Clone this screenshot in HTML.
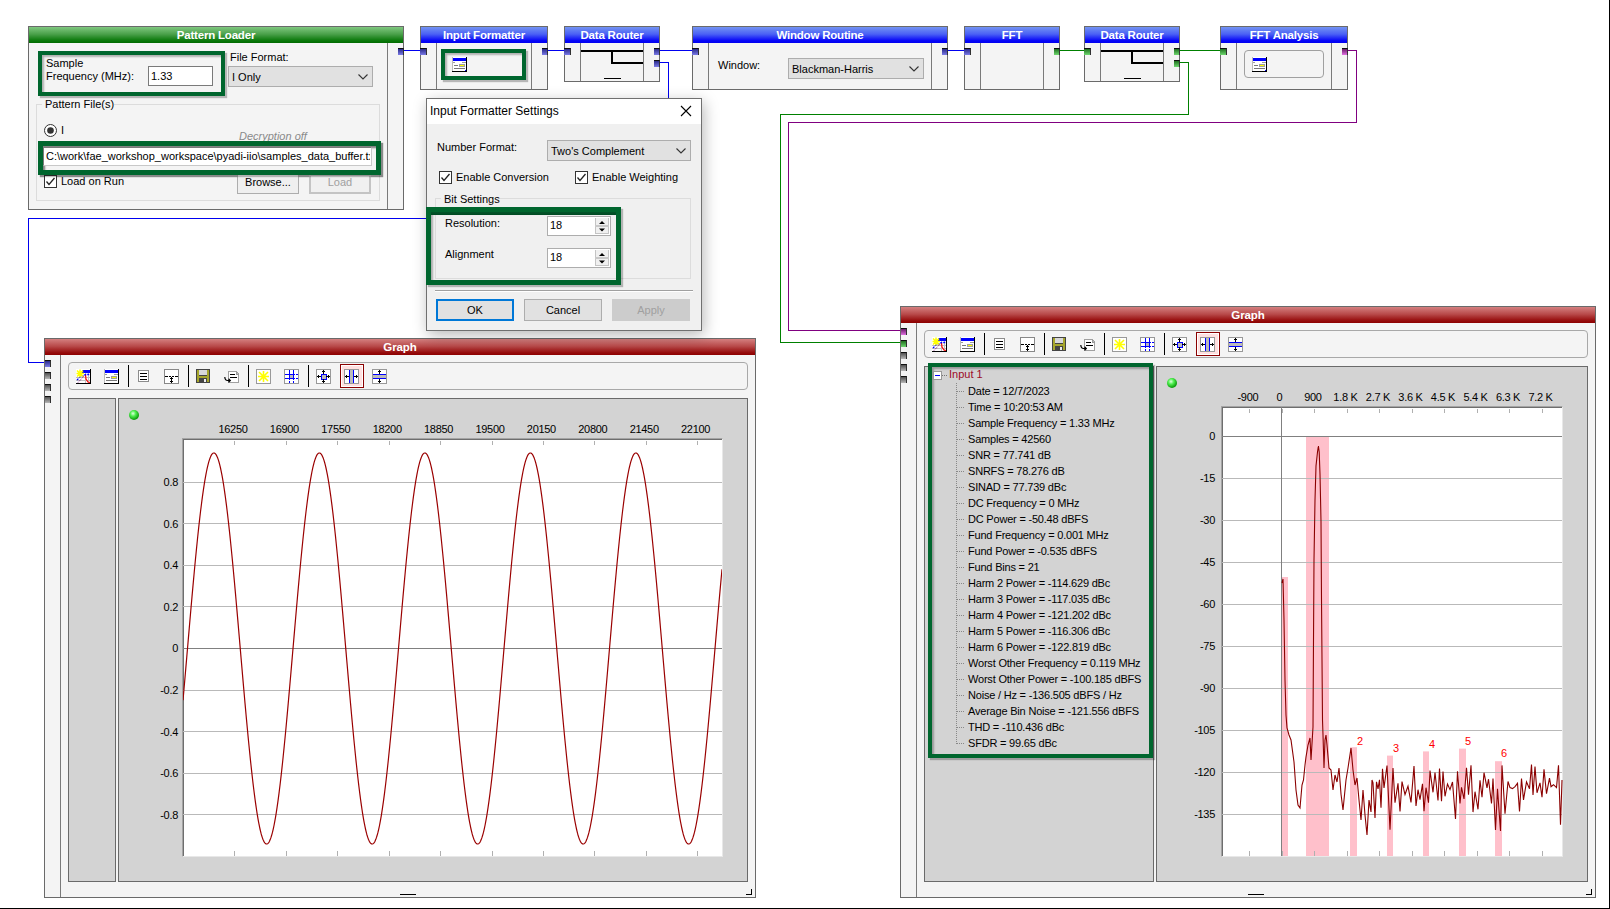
<!DOCTYPE html><html><head><meta charset="utf-8"><style>
html,body{margin:0;padding:0;} body{width:1610px;height:909px;position:relative;overflow:hidden;background:#fff;font-family:"Liberation Sans", sans-serif;}
body>div,body>svg{position:absolute;} .t{white-space:pre;color:#000;}
</style></head><body>
<div style="left:403px;top:50px;width:18px;height:1px;background:#0000f0"></div>
<div style="left:547px;top:50px;width:18px;height:1px;background:#0000f0"></div>
<div style="left:659px;top:50px;width:34px;height:1px;background:#0000f0"></div>
<div style="left:659px;top:62px;width:10px;height:1px;background:#0000f0"></div>
<div style="left:668px;top:62px;width:1px;height:157px;background:#0000f0"></div>
<div style="left:28px;top:218px;width:641px;height:1px;background:#0000f0"></div>
<div style="left:28px;top:218px;width:1px;height:145px;background:#0000f0"></div>
<div style="left:28px;top:362px;width:17px;height:1px;background:#0000f0"></div>
<div style="left:947px;top:50px;width:18px;height:1px;background:#0000f0"></div>
<div style="left:1059px;top:50px;width:26px;height:1px;background:#008000"></div>
<div style="left:1179px;top:50px;width:42px;height:1px;background:#008000"></div>
<div style="left:1179px;top:62px;width:10px;height:1px;background:#008000"></div>
<div style="left:1188px;top:62px;width:1px;height:53px;background:#008000"></div>
<div style="left:780px;top:114px;width:409px;height:1px;background:#008000"></div>
<div style="left:780px;top:114px;width:1px;height:229px;background:#008000"></div>
<div style="left:780px;top:342px;width:121px;height:1px;background:#008000"></div>
<div style="left:1347px;top:50px;width:10px;height:1px;background:#800080"></div>
<div style="left:1356px;top:50px;width:1px;height:73px;background:#800080"></div>
<div style="left:788px;top:122px;width:569px;height:1px;background:#800080"></div>
<div style="left:788px;top:122px;width:1px;height:209px;background:#800080"></div>
<div style="left:788px;top:330px;width:113px;height:1px;background:#800080"></div>
<div style="left:28px;top:26px;width:376px;height:184px;background:#f4f4f4;border:1px solid #6a6a6a;box-sizing:border-box"></div>
<div style="left:29px;top:27px;width:374px;height:16px;background:linear-gradient(#80c880,#4aa04a 45%,#0a780a 85%,#006a00)"></div>
<div style="left:387px;top:43px;width:1px;height:166px;background:#7a7a7a"></div>
<div class="t" style="left:28.0px;top:29.6px;width:376px;text-align:center;font-size:11.5px;line-height:11.5px;font-weight:bold;color:#fff;letter-spacing:-0.2px">Pattern Loader</div>
<div style="left:398px;top:48px;width:6px;height:7px;background:linear-gradient(#2a2a8a,#7a7ae6);border-top:1px solid #101010;border-right:1px solid #303030;box-sizing:border-box"></div>
<div style="left:38px;top:51px;width:187px;height:45px;border:4px solid #00662e;box-sizing:border-box;box-shadow:2px 2px 1px rgba(0,0,0,.25), inset 2px 2px 2px rgba(0,0,0,.28)"></div>
<div class="t" style="left:46px;top:58px;font-size:11px;line-height:11px;">Sample</div>
<div class="t" style="left:46px;top:71px;font-size:11px;line-height:11px;">Frequency (MHz):</div>
<div style="left:148px;top:66px;width:65px;height:20px;background:#fff;border:1px solid #7a7a7a;box-sizing:border-box"></div>
<div class="t" style="left:151px;top:71px;font-size:11px;line-height:11px;">1.33</div>
<div class="t" style="left:230px;top:52px;font-size:11px;line-height:11px;">File Format:</div>
<div style="left:228px;top:66px;width:145px;height:21px;background:#e1e1e1;border:1px solid #adadad;box-sizing:border-box"></div>
<div class="t" style="left:232px;top:72px;font-size:11px;line-height:11px;color:#000">I Only</div>
<svg style="left:358px;top:74px" width="10" height="6"><polyline points="0.5,0.5 5,5 9.5,0.5" fill="none" stroke="#333" stroke-width="1.1"/></svg>
<div style="left:36px;top:104px;width:344px;height:97px;border:1px solid #dcdcdc;box-sizing:border-box"></div>
<div style="left:42px;top:100px;width:72px;height:10px;background:#f4f4f4"></div>
<div class="t" style="left:45px;top:99px;font-size:11px;line-height:11px;">Pattern File(s)</div>
<svg style="left:43px;top:123px" width="15" height="15"><circle cx="7.5" cy="7.5" r="6" fill="#fff" stroke="#333" stroke-width="1"/><circle cx="7.5" cy="7.5" r="3.3" fill="#333"/></svg>
<div class="t" style="left:61px;top:125px;font-size:11px;line-height:11px;">I</div>
<div class="t" style="left:239px;top:131px;font-size:11px;line-height:11px;font-style:italic;color:#8a8a8a">Decryption off</div>
<div style="left:38px;top:141px;width:343px;height:34px;border:5px solid #00662e;box-sizing:border-box;box-shadow:2px 2px 1px rgba(0,0,0,.25), inset 2px 2px 2px rgba(0,0,0,.28)"></div>
<div style="left:43px;top:147px;width:329px;height:19px;background:#fff;border:1px solid #7a7a7a;border-right-color:#c8c8c8;border-bottom-color:#c8c8c8;box-sizing:border-box"></div>
<div class="t" style="left:46px;top:151px;width:324px;overflow:hidden;font-size:11px;line-height:11px;letter-spacing:0px">C:\work\fae_workshop_workspace\pyadi-iio\samples_data_buffer.txt</div>
<div style="left:44px;top:175px;width:13px;height:13px;background:#fff;border:1px solid #333;box-sizing:border-box"></div>
<svg style="left:44px;top:175px" width="13" height="13"><polyline points="2.5,6.5 5,9.5 10.5,3" fill="none" stroke="#222" stroke-width="1.3"/></svg>
<div class="t" style="left:61px;top:176px;font-size:11px;line-height:11px;">Load on Run</div>
<div style="left:237px;top:174px;width:62px;height:20px;background:#e1e1e1;border:1px solid #adadad;box-sizing:border-box;background:#efefef"></div>
<div class="t" style="left:237.5px;top:177px;width:61px;text-align:center;font-size:11px;line-height:11px;color:#000">Browse...</div>
<div style="left:309px;top:174px;width:62px;height:20px;background:#e1e1e1;border:1px solid #adadad;box-sizing:border-box;background:#f0f0f0;border:2px solid #c4c4c4"></div>
<div class="t" style="left:309.5px;top:177px;width:61px;text-align:center;font-size:11px;line-height:11px;color:#a0a0a0">Load</div>
<div style="left:38px;top:141px;width:343px;height:34px;border:5px solid #00662e;box-sizing:border-box;box-shadow:2px 2px 1px rgba(0,0,0,.25), inset 2px 2px 2px rgba(0,0,0,.28)"></div>
<div style="left:43px;top:147px;width:329px;height:19px;background:#fff;border:1px solid #7a7a7a;border-right-color:#c8c8c8;border-bottom-color:#c8c8c8;box-sizing:border-box"></div>
<div class="t" style="left:46px;top:151px;width:324px;overflow:hidden;font-size:11px;line-height:11px;letter-spacing:0px">C:\work\fae_workshop_workspace\pyadi-iio\samples_data_buffer.txt</div>
<div style="left:420px;top:26px;width:128px;height:64px;background:#f4f4f4;border:1px solid #6a6a6a;box-sizing:border-box"></div>
<div style="left:421px;top:27px;width:126px;height:16px;background:linear-gradient(#7393f2,#4a60f5 45%,#0606f8 85%,#0000f0)"></div>
<div style="left:436px;top:43px;width:1px;height:46px;background:#7a7a7a"></div>
<div style="left:531px;top:43px;width:1px;height:46px;background:#7a7a7a"></div>
<div class="t" style="left:420.0px;top:29.6px;width:128px;text-align:center;font-size:11.5px;line-height:11.5px;font-weight:bold;color:#fff;letter-spacing:-0.2px">Input Formatter</div>
<div style="left:420px;top:48px;width:7px;height:7px;background:linear-gradient(#2a2a8a,#7a7ae6);border-top:1px solid #101010;border-right:1px solid #303030;box-sizing:border-box"></div>
<div style="left:542px;top:48px;width:6px;height:7px;background:linear-gradient(#2a2a8a,#7a7ae6);border-top:1px solid #101010;border-right:1px solid #303030;box-sizing:border-box"></div>
<div style="left:441px;top:49px;width:85px;height:31px;border:4px solid #00662e;box-sizing:border-box;box-shadow:2px 2px 1px rgba(0,0,0,.25), inset 2px 2px 2px rgba(0,0,0,.28)"></div>
<svg style="left:452px;top:57px" width="15" height="15" shape-rendering="crispEdges">
<rect x="0" y="0" width="15" height="15" fill="#fff"/>
<rect x="0" y="1" width="14" height="3" fill="#0000ff"/>
<rect x="1" y="5" width="2" height="1" fill="#999"/><rect x="10" y="5" width="4" height="1" fill="#999"/>
<rect x="2" y="8" width="4" height="1" fill="#777"/><rect x="7" y="7" width="6" height="3" fill="#a0a0a0"/><rect x="8" y="8" width="4" height="1" fill="#ffff00"/>
<rect x="2" y="11" width="11" height="1" fill="#777"/>
<rect x="0" y="0" width="1" height="14" fill="#bbb"/>
<rect x="14" y="0" width="1" height="15" fill="#000"/><rect x="0" y="14" width="15" height="1" fill="#000"/>
<rect x="13" y="13" width="1" height="1" fill="#00f"/>
</svg>
<div style="left:564px;top:26px;width:96px;height:56px;background:#f4f4f4;border:1px solid #6a6a6a;box-sizing:border-box"></div>
<div style="left:565px;top:27px;width:94px;height:16px;background:linear-gradient(#7393f2,#4a60f5 45%,#0606f8 85%,#0000f0)"></div>
<div style="left:580px;top:43px;width:1px;height:38px;background:#7a7a7a"></div>
<div style="left:643px;top:43px;width:1px;height:38px;background:#7a7a7a"></div>
<div class="t" style="left:564.0px;top:29.6px;width:96px;text-align:center;font-size:11.5px;line-height:11.5px;font-weight:bold;color:#fff;letter-spacing:-0.2px">Data Router</div>
<div style="left:581px;top:50px;width:62px;height:2px;background:#000"></div>
<div style="left:611px;top:50px;width:2px;height:14px;background:#000"></div>
<div style="left:611px;top:62px;width:32px;height:2px;background:#000"></div>
<div style="left:604px;top:78px;width:17px;height:1px;background:#000"></div>
<div style="left:564px;top:48px;width:7px;height:7px;background:linear-gradient(#2a2a8a,#7a7ae6);border-top:1px solid #101010;border-right:1px solid #303030;box-sizing:border-box"></div>
<div style="left:654px;top:48px;width:6px;height:7px;background:linear-gradient(#2a2a8a,#7a7ae6);border-top:1px solid #101010;border-right:1px solid #303030;box-sizing:border-box"></div>
<div style="left:654px;top:60px;width:6px;height:7px;background:linear-gradient(#2a2a8a,#7a7ae6);border-top:1px solid #101010;border-right:1px solid #303030;box-sizing:border-box"></div>
<div style="left:692px;top:26px;width:256px;height:64px;background:#f4f4f4;border:1px solid #6a6a6a;box-sizing:border-box"></div>
<div style="left:693px;top:27px;width:254px;height:16px;background:linear-gradient(#7393f2,#4a60f5 45%,#0606f8 85%,#0000f0)"></div>
<div style="left:708px;top:43px;width:1px;height:46px;background:#7a7a7a"></div>
<div style="left:931px;top:43px;width:1px;height:46px;background:#7a7a7a"></div>
<div class="t" style="left:692.0px;top:29.6px;width:256px;text-align:center;font-size:11.5px;line-height:11.5px;font-weight:bold;color:#fff;letter-spacing:-0.2px">Window Routine</div>
<div style="left:692px;top:48px;width:7px;height:7px;background:linear-gradient(#2a2a8a,#7a7ae6);border-top:1px solid #101010;border-right:1px solid #303030;box-sizing:border-box"></div>
<div style="left:942px;top:48px;width:6px;height:7px;background:linear-gradient(#2a2a8a,#7a7ae6);border-top:1px solid #101010;border-right:1px solid #303030;box-sizing:border-box"></div>
<div class="t" style="left:718px;top:60px;font-size:11px;line-height:11px;">Window:</div>
<div style="left:788px;top:58px;width:136px;height:21px;background:#e1e1e1;border:1px solid #adadad;box-sizing:border-box"></div>
<div class="t" style="left:792px;top:64px;font-size:11px;line-height:11px;color:#000">Blackman-Harris</div>
<svg style="left:909px;top:66px" width="10" height="6"><polyline points="0.5,0.5 5,5 9.5,0.5" fill="none" stroke="#333" stroke-width="1.1"/></svg>
<div style="left:964px;top:26px;width:96px;height:64px;background:#f4f4f4;border:1px solid #6a6a6a;box-sizing:border-box"></div>
<div style="left:965px;top:27px;width:94px;height:16px;background:linear-gradient(#7393f2,#4a60f5 45%,#0606f8 85%,#0000f0)"></div>
<div style="left:980px;top:43px;width:1px;height:46px;background:#7a7a7a"></div>
<div style="left:1043px;top:43px;width:1px;height:46px;background:#7a7a7a"></div>
<div class="t" style="left:964.0px;top:29.6px;width:96px;text-align:center;font-size:11.5px;line-height:11.5px;font-weight:bold;color:#fff;letter-spacing:-0.2px">FFT</div>
<div style="left:964px;top:48px;width:7px;height:7px;background:linear-gradient(#2a2a8a,#7a7ae6);border-top:1px solid #101010;border-right:1px solid #303030;box-sizing:border-box"></div>
<div style="left:1054px;top:48px;width:6px;height:7px;background:linear-gradient(#1f6f1f,#6fd86f);border-top:1px solid #101010;border-right:1px solid #303030;box-sizing:border-box"></div>
<div style="left:1084px;top:26px;width:96px;height:56px;background:#f4f4f4;border:1px solid #6a6a6a;box-sizing:border-box"></div>
<div style="left:1085px;top:27px;width:94px;height:16px;background:linear-gradient(#7393f2,#4a60f5 45%,#0606f8 85%,#0000f0)"></div>
<div style="left:1100px;top:43px;width:1px;height:38px;background:#7a7a7a"></div>
<div style="left:1163px;top:43px;width:1px;height:38px;background:#7a7a7a"></div>
<div class="t" style="left:1084.0px;top:29.6px;width:96px;text-align:center;font-size:11.5px;line-height:11.5px;font-weight:bold;color:#fff;letter-spacing:-0.2px">Data Router</div>
<div style="left:1101px;top:50px;width:62px;height:2px;background:#000"></div>
<div style="left:1131px;top:50px;width:2px;height:14px;background:#000"></div>
<div style="left:1131px;top:62px;width:32px;height:2px;background:#000"></div>
<div style="left:1124px;top:78px;width:17px;height:1px;background:#000"></div>
<div style="left:1084px;top:48px;width:7px;height:7px;background:linear-gradient(#1f6f1f,#6fd86f);border-top:1px solid #101010;border-right:1px solid #303030;box-sizing:border-box"></div>
<div style="left:1174px;top:48px;width:6px;height:7px;background:linear-gradient(#1f6f1f,#6fd86f);border-top:1px solid #101010;border-right:1px solid #303030;box-sizing:border-box"></div>
<div style="left:1174px;top:60px;width:6px;height:7px;background:linear-gradient(#1f6f1f,#6fd86f);border-top:1px solid #101010;border-right:1px solid #303030;box-sizing:border-box"></div>
<div style="left:1220px;top:26px;width:128px;height:64px;background:#f4f4f4;border:1px solid #6a6a6a;box-sizing:border-box"></div>
<div style="left:1221px;top:27px;width:126px;height:16px;background:linear-gradient(#7393f2,#4a60f5 45%,#0606f8 85%,#0000f0)"></div>
<div style="left:1236px;top:43px;width:1px;height:46px;background:#7a7a7a"></div>
<div style="left:1331px;top:43px;width:1px;height:46px;background:#7a7a7a"></div>
<div class="t" style="left:1220.0px;top:29.6px;width:128px;text-align:center;font-size:11.5px;line-height:11.5px;font-weight:bold;color:#fff;letter-spacing:-0.2px">FFT Analysis</div>
<div style="left:1220px;top:48px;width:7px;height:7px;background:linear-gradient(#1f6f1f,#6fd86f);border-top:1px solid #101010;border-right:1px solid #303030;box-sizing:border-box"></div>
<div style="left:1342px;top:48px;width:6px;height:7px;background:linear-gradient(#6a1a6a,#e070e0);border-top:1px solid #101010;border-right:1px solid #303030;box-sizing:border-box"></div>
<div style="left:1244px;top:50px;width:80px;height:28px;border:1px solid #a0a0a0;border-radius:4px;box-sizing:border-box"></div>
<svg style="left:1252px;top:57px" width="15" height="15" shape-rendering="crispEdges">
<rect x="0" y="0" width="15" height="15" fill="#fff"/>
<rect x="0" y="1" width="14" height="3" fill="#0000ff"/>
<rect x="1" y="5" width="2" height="1" fill="#999"/><rect x="10" y="5" width="4" height="1" fill="#999"/>
<rect x="2" y="8" width="4" height="1" fill="#777"/><rect x="7" y="7" width="6" height="3" fill="#a0a0a0"/><rect x="8" y="8" width="4" height="1" fill="#ffff00"/>
<rect x="2" y="11" width="11" height="1" fill="#777"/>
<rect x="0" y="0" width="1" height="14" fill="#bbb"/>
<rect x="14" y="0" width="1" height="15" fill="#000"/><rect x="0" y="14" width="15" height="1" fill="#000"/>
<rect x="13" y="13" width="1" height="1" fill="#00f"/>
</svg>
<div style="left:44px;top:338px;width:712px;height:560px;background:#f4f4f4;border:1px solid #6a6a6a;box-sizing:border-box"></div>
<div style="left:45px;top:339px;width:710px;height:16px;background:linear-gradient(#d48080,#b84a4a 45%,#960c0c 85%,#8c0000)"></div>
<div class="t" style="left:44.0px;top:341.6px;width:712px;text-align:center;font-size:11.5px;line-height:11.5px;font-weight:bold;color:#fff;letter-spacing:-0.1px">Graph</div>
<div style="left:60px;top:355px;width:1px;height:542px;background:#7a7a7a"></div>
<svg style="left:746px;top:889px" width="7" height="7" shape-rendering="crispEdges"><rect x="5" y="0" width="1" height="6" fill="#000"/><rect x="0" y="5" width="6" height="1" fill="#000"/></svg>
<div style="left:45px;top:360px;width:6px;height:7px;background:linear-gradient(#2a2a8a,#7a7ae6);border-top:1px solid #101010;border-right:1px solid #303030;box-sizing:border-box"></div>
<div style="left:45px;top:372px;width:6px;height:7px;background:linear-gradient(#505050,#b8b8b8);border-top:1px solid #101010;border-right:1px solid #303030;box-sizing:border-box"></div>
<div style="left:45px;top:384px;width:6px;height:7px;background:linear-gradient(#505050,#b8b8b8);border-top:1px solid #101010;border-right:1px solid #303030;box-sizing:border-box"></div>
<div style="left:45px;top:396px;width:6px;height:7px;background:linear-gradient(#505050,#b8b8b8);border-top:1px solid #101010;border-right:1px solid #303030;box-sizing:border-box"></div>
<div style="left:68px;top:362px;width:680px;height:28px;border:1px solid #a8a8a8;border-radius:4px;box-sizing:border-box"></div>
<div style="left:128px;top:365px;width:1px;height:22px;background:#000"></div>
<div style="left:188px;top:365px;width:1px;height:22px;background:#000"></div>
<div style="left:248px;top:365px;width:1px;height:22px;background:#000"></div>
<div style="left:308px;top:365px;width:1px;height:22px;background:#000"></div>
<div style="left:340px;top:364px;width:24px;height:24px;background:#ffe0e0;border:1px solid #8b0000;box-shadow:inset 0 0 0 1px #fff;box-sizing:border-box"></div>
<svg style="left:76px;top:369px" width="16" height="16" shape-rendering="crispEdges"><rect x="0" y="0" width="15" height="15" fill="#fff"/><rect x="6" y="1" width="8" height="3" fill="#00f"/><rect x="0" y="8" width="14" height="1" fill="#c0c0c0"/><rect x="0" y="11" width="14" height="1" fill="#c0c0c0"/><rect x="9" y="4" width="1" height="10" fill="#c0c0c0"/><rect x="12" y="4" width="1" height="10" fill="#c0c0c0"/><path d="M2 13.5 L9 6" stroke="#800080" stroke-width="1" stroke-dasharray="1,1" fill="none" shape-rendering="auto"/><path d="M9.5 6 L10 10 L12 13 L14 13.5" stroke="#f00" stroke-width="1.2" fill="none" shape-rendering="auto"/><path d="M1 11 L4 8 L8 6 L10 5.5 L14 5.5" stroke="#00f" stroke-width="1.3" fill="none" stroke-dasharray="2,1" shape-rendering="auto"/><path d="M1 1.5 L7 7.5 M7 1.5 L1 7.5 M4 0.5 L4 8.5 M0.5 4.5 L8 4.5" stroke="#ff0" stroke-width="1.5" shape-rendering="auto"/><rect x="14" y="0" width="1" height="15" fill="#000"/><rect x="0" y="14" width="15" height="1" fill="#000"/></svg>
<svg style="left:104px;top:369px" width="16" height="16" shape-rendering="crispEdges"><rect x="0" y="0" width="15" height="15" fill="#fff"/><rect x="0" y="1" width="14" height="3" fill="#00f"/><rect x="1" y="5" width="2" height="1" fill="#999"/><rect x="10" y="5" width="4" height="1" fill="#999"/><rect x="2" y="8" width="4" height="1" fill="#777"/><rect x="7" y="7" width="6" height="3" fill="#a0a0a0"/><rect x="8" y="8" width="4" height="1" fill="#ff0"/><rect x="2" y="11" width="11" height="1" fill="#777"/><rect x="0" y="0" width="1" height="14" fill="#bbb"/><rect x="14" y="0" width="1" height="15" fill="#000"/><rect x="0" y="14" width="15" height="1" fill="#000"/></svg>
<svg style="left:138px;top:369px" width="16" height="16" shape-rendering="crispEdges"><rect x="0.5" y="1.5" width="10" height="11" fill="#fff" stroke="#8c8c8c" stroke-width="1"/><rect x="2" y="4" width="7" height="1" fill="#000"/><rect x="2" y="7" width="7" height="1" fill="#000"/><rect x="2" y="10" width="7" height="1" fill="#000"/></svg>
<svg style="left:164px;top:369px" width="16" height="16" shape-rendering="crispEdges"><rect x="0.5" y="0.5" width="14" height="14" fill="#fff" stroke="#888" stroke-width="1"/><rect x="1" y="7" width="3" height="1" fill="#000"/><rect x="5" y="7" width="2" height="1" fill="#000"/><rect x="8" y="7" width="2" height="1" fill="#000"/><rect x="11" y="7" width="3" height="1" fill="#000"/><rect x="7" y="8" width="1" height="6" fill="#000"/><rect x="6" y="9" width="3" height="1" fill="#000"/><rect x="6" y="12" width="3" height="1" fill="#000"/></svg>
<svg style="left:196px;top:369px" width="16" height="16" shape-rendering="crispEdges"><rect x="0" y="0" width="14" height="14" fill="#444"/><rect x="1" y="1" width="12" height="12" fill="#a6a62c"/><rect x="3" y="1" width="8" height="6" fill="#444"/><rect x="3" y="1" width="8" height="5" fill="#d8d8d8"/><rect x="3" y="9" width="8" height="5" fill="#444"/><rect x="8" y="10" width="2" height="3" fill="#eee"/></svg>
<svg style="left:224px;top:369px" width="16" height="16" shape-rendering="crispEdges"><path d="M4.5 2.5 L12 2.5 L14.5 5 L14.5 13.5 L4.5 13.5 Z" fill="#fff" stroke="#a0a0a0" stroke-width="1"/><path d="M12 2.5 L12 5 L14.5 5" fill="#bbb" stroke="#999" stroke-width="1"/><rect x="6" y="5" width="5" height="1" fill="#000"/><rect x="6" y="8" width="7" height="1" fill="#000"/><path d="M0.8 8 Q1 11.5 3.5 11.5 L6 11.5 M4.5 9.8 L6.3 11.5 L4.5 13.2" stroke="#000" stroke-width="1.2" fill="none" shape-rendering="auto"/></svg>
<svg style="left:256px;top:369px" width="16" height="16" shape-rendering="crispEdges"><rect x="0.5" y="0.5" width="14" height="14" fill="#fff" stroke="#999" stroke-width="1"/><path d="M3 3 L12 12 M12 3 L3 12 M7.5 2 L7.5 13 M2 7.5 L13 7.5" stroke="#ff0" stroke-width="1.6" shape-rendering="auto"/></svg>
<svg style="left:284px;top:369px" width="16" height="16" shape-rendering="crispEdges"><rect x="0.5" y="0.5" width="14" height="14" fill="#fff" stroke="#999" stroke-width="1"/><rect x="1" y="5" width="10" height="1" fill="#00f"/><rect x="1" y="9" width="10" height="1" fill="#00f"/><rect x="12" y="5" width="2" height="1" fill="#00f"/><rect x="12" y="9" width="2" height="1" fill="#00f"/><rect x="5" y="1" width="1" height="10" fill="#00f"/><rect x="9" y="1" width="1" height="10" fill="#00f"/><rect x="5" y="12" width="1" height="2" fill="#00f"/><rect x="9" y="12" width="1" height="2" fill="#00f"/><rect x="6" y="6" width="3" height="3" fill="#bbb"/></svg>
<svg style="left:316px;top:369px" width="16" height="16" shape-rendering="crispEdges"><rect x="0.5" y="0.5" width="14" height="14" fill="#fff" stroke="#999" stroke-width="1"/><rect x="5" y="5" width="5" height="5" fill="#bbb" stroke="#00f" stroke-width="1"/><rect x="7" y="1" width="1" height="4" fill="#000"/><rect x="7" y="10" width="1" height="4" fill="#000"/><rect x="1" y="7" width="4" height="1" fill="#000"/><rect x="10" y="7" width="4" height="1" fill="#000"/><rect x="6" y="2" width="3" height="1" fill="#000"/><rect x="6" y="12" width="3" height="1" fill="#000"/><rect x="2" y="6" width="1" height="3" fill="#000"/><rect x="12" y="6" width="1" height="3" fill="#000"/></svg>
<svg style="left:344px;top:369px" width="16" height="16" shape-rendering="crispEdges"><rect x="0.5" y="0.5" width="14" height="14" fill="#fff" stroke="#999" stroke-width="1"/><rect x="6" y="1" width="3" height="13" fill="#bbb"/><rect x="5" y="1" width="1" height="13" fill="#00f"/><rect x="9" y="1" width="1" height="13" fill="#00f"/><rect x="1" y="7" width="4" height="1" fill="#000"/><rect x="10" y="7" width="4" height="1" fill="#000"/><rect x="2" y="6" width="1" height="3" fill="#000"/><rect x="12" y="6" width="1" height="3" fill="#000"/></svg>
<svg style="left:372px;top:369px" width="16" height="16" shape-rendering="crispEdges"><rect x="0.5" y="0.5" width="14" height="14" fill="#fff" stroke="#999" stroke-width="1"/><rect x="1" y="6" width="13" height="3" fill="#bbb"/><rect x="1" y="5" width="13" height="1" fill="#00f"/><rect x="1" y="9" width="13" height="1" fill="#00f"/><rect x="7" y="1" width="1" height="4" fill="#000"/><rect x="7" y="10" width="1" height="4" fill="#000"/><rect x="6" y="2" width="3" height="1" fill="#000"/><rect x="6" y="12" width="3" height="1" fill="#000"/></svg>
<div style="left:68px;top:398px;width:48px;height:484px;background:#d3d3d3;border:1px solid #6a6a6a;box-sizing:border-box"></div>
<div style="left:118px;top:398px;width:630px;height:484px;background:#d3d3d3;border:1px solid #6a6a6a;box-sizing:border-box"></div>
<svg style="left:128px;top:409px" width="12" height="12"><defs><radialGradient id="g134" cx="0.4" cy="0.35" r="0.6"><stop offset="0" stop-color="#e0ffe0"/><stop offset="0.45" stop-color="#50f050"/><stop offset="1" stop-color="#10a010"/></radialGradient></defs><circle cx="6" cy="6" r="5" fill="url(#g134)"/></svg>
<div style="left:400px;top:894px;width:16px;height:1px;background:#000"></div>
<div style="left:182px;top:438px;width:541px;height:419px;background:#fff;border-left:1px solid #a4a4a4;border-top:1px solid #a4a4a4;border-right:1px solid #e8e8e8;border-bottom:1px solid #e8e8e8;box-shadow:inset 1px 1px 0 #6e6e6e;box-sizing:border-box"></div>
<svg style="left:183px;top:439px" width="539" height="417"><line x1="0" x2="539" y1="375.5" y2="375.5" stroke="#b9b9b9" stroke-width="1"/><line x1="0" x2="539" y1="334.5" y2="334.5" stroke="#b9b9b9" stroke-width="1"/><line x1="0" x2="539" y1="292.5" y2="292.5" stroke="#b9b9b9" stroke-width="1"/><line x1="0" x2="539" y1="251.5" y2="251.5" stroke="#b9b9b9" stroke-width="1"/><line x1="0" x2="539" y1="209.5" y2="209.5" stroke="#808080" stroke-width="1"/><line x1="0" x2="539" y1="167.5" y2="167.5" stroke="#b9b9b9" stroke-width="1"/><line x1="0" x2="539" y1="126.5" y2="126.5" stroke="#b9b9b9" stroke-width="1"/><line x1="0" x2="539" y1="84.5" y2="84.5" stroke="#b9b9b9" stroke-width="1"/><line x1="0" x2="539" y1="43.5" y2="43.5" stroke="#b9b9b9" stroke-width="1"/><line x1="51.5" x2="51.5" y1="2" y2="6" stroke="#b0b0b0"/><line x1="51.5" x2="51.5" y1="412" y2="417" stroke="#b0b0b0"/><line x1="103.5" x2="103.5" y1="2" y2="6" stroke="#b0b0b0"/><line x1="103.5" x2="103.5" y1="412" y2="417" stroke="#b0b0b0"/><line x1="154.5" x2="154.5" y1="2" y2="6" stroke="#b0b0b0"/><line x1="154.5" x2="154.5" y1="412" y2="417" stroke="#b0b0b0"/><line x1="206.5" x2="206.5" y1="2" y2="6" stroke="#b0b0b0"/><line x1="206.5" x2="206.5" y1="412" y2="417" stroke="#b0b0b0"/><line x1="257.5" x2="257.5" y1="2" y2="6" stroke="#b0b0b0"/><line x1="257.5" x2="257.5" y1="412" y2="417" stroke="#b0b0b0"/><line x1="309.5" x2="309.5" y1="2" y2="6" stroke="#b0b0b0"/><line x1="309.5" x2="309.5" y1="412" y2="417" stroke="#b0b0b0"/><line x1="360.5" x2="360.5" y1="2" y2="6" stroke="#b0b0b0"/><line x1="360.5" x2="360.5" y1="412" y2="417" stroke="#b0b0b0"/><line x1="411.5" x2="411.5" y1="2" y2="6" stroke="#b0b0b0"/><line x1="411.5" x2="411.5" y1="412" y2="417" stroke="#b0b0b0"/><line x1="463.5" x2="463.5" y1="2" y2="6" stroke="#b0b0b0"/><line x1="463.5" x2="463.5" y1="412" y2="417" stroke="#b0b0b0"/><line x1="514.5" x2="514.5" y1="2" y2="6" stroke="#b0b0b0"/><line x1="514.5" x2="514.5" y1="412" y2="417" stroke="#b0b0b0"/><polyline points="0.0,261.3 0.5,255.6 1.0,250.0 1.5,244.2 2.0,238.5 2.5,232.7 3.0,226.9 3.5,221.1 4.0,215.3 4.5,209.5 5.0,203.7 5.5,197.9 6.0,192.1 6.5,186.3 7.0,180.5 7.5,174.8 8.0,169.0 8.5,163.4 9.0,157.7 9.5,152.1 10.0,146.6 10.5,141.1 11.0,135.7 11.5,130.3 12.0,125.0 12.5,119.8 13.0,114.7 13.5,109.6 14.0,104.7 14.5,99.8 15.0,95.0 15.5,90.4 16.0,85.8 16.5,81.4 17.0,77.0 17.5,72.8 18.0,68.7 18.5,64.7 19.0,60.9 19.5,57.2 20.0,53.6 20.5,50.1 21.0,46.8 21.5,43.7 22.0,40.7 22.5,37.8 23.0,35.1 23.5,32.5 24.0,30.1 24.5,27.9 25.0,25.8 25.5,23.9 26.0,22.2 26.5,20.6 27.0,19.2 27.5,17.9 28.0,16.8 28.5,15.9 29.0,15.2 29.5,14.6 30.0,14.2 30.5,14.0 31.0,14.0 31.5,14.1 32.0,14.4 32.5,14.9 33.0,15.5 33.5,16.4 34.0,17.4 34.5,18.5 35.0,19.9 35.5,21.4 36.0,23.0 36.5,24.8 37.0,26.8 37.5,29.0 38.0,31.3 38.5,33.8 39.0,36.4 39.5,39.2 40.0,42.1 40.5,45.2 41.0,48.5 41.5,51.8 42.0,55.3 42.5,59.0 43.0,62.8 43.5,66.7 44.0,70.7 44.5,74.9 45.0,79.2 45.5,83.6 46.0,88.1 46.5,92.7 47.0,97.4 47.5,102.2 48.0,107.2 48.5,112.2 49.0,117.3 49.5,122.4 50.0,127.7 50.5,133.0 51.0,138.4 51.5,143.8 52.0,149.4 52.5,154.9 53.0,160.5 53.5,166.2 54.0,171.9 54.5,177.6 55.0,183.4 55.5,189.2 56.0,195.0 56.5,200.8 57.0,206.6 57.5,212.4 58.0,218.2 58.5,224.0 59.0,229.8 59.5,235.6 60.0,241.4 60.5,247.1 61.0,252.8 61.5,258.5 62.0,264.1 62.5,269.6 63.0,275.2 63.5,280.6 64.0,286.0 64.5,291.3 65.0,296.6 65.5,301.7 66.0,306.8 66.5,311.8 67.0,316.8 67.5,321.6 68.0,326.3 68.5,330.9 69.0,335.4 69.5,339.8 70.0,344.1 70.5,348.3 71.0,352.3 71.5,356.2 72.0,360.0 72.5,363.7 73.0,367.2 73.5,370.5 74.0,373.8 74.5,376.9 75.0,379.8 75.5,382.6 76.0,385.2 76.5,387.7 77.0,390.0 77.5,392.2 78.0,394.2 78.5,396.0 79.0,397.6 79.5,399.1 80.0,400.5 80.5,401.6 81.0,402.6 81.5,403.5 82.0,404.1 82.5,404.6 83.0,404.9 83.5,405.0 84.0,405.0 84.5,404.8 85.0,404.4 85.5,403.8 86.0,403.1 86.5,402.2 87.0,401.1 87.5,399.8 88.0,398.4 88.5,396.8 89.0,395.1 89.5,393.2 90.0,391.1 90.5,388.9 91.0,386.5 91.5,383.9 92.0,381.2 92.5,378.3 93.0,375.3 93.5,372.2 94.0,368.9 94.5,365.4 95.0,361.8 95.5,358.1 96.0,354.3 96.5,350.3 97.0,346.2 97.5,342.0 98.0,337.6 98.5,333.2 99.0,328.6 99.5,324.0 100.0,319.2 100.5,314.3 101.0,309.4 101.5,304.3 102.0,299.2 102.5,294.0 103.0,288.7 103.5,283.3 104.0,277.9 104.5,272.4 105.0,266.9 105.5,261.3 106.0,255.6 106.5,250.0 107.0,244.2 107.5,238.5 108.0,232.7 108.5,226.9 109.0,221.1 109.5,215.3 110.0,209.5 110.5,203.7 111.0,197.9 111.5,192.1 112.0,186.3 112.5,180.5 113.0,174.8 113.5,169.0 114.0,163.4 114.5,157.7 115.0,152.1 115.5,146.6 116.0,141.1 116.5,135.7 117.0,130.3 117.5,125.0 118.0,119.8 118.5,114.7 119.0,109.6 119.5,104.7 120.0,99.8 120.5,95.0 121.0,90.4 121.5,85.8 122.0,81.4 122.5,77.0 123.0,72.8 123.5,68.7 124.0,64.7 124.5,60.9 125.0,57.2 125.5,53.6 126.0,50.1 126.5,46.8 127.0,43.7 127.5,40.7 128.0,37.8 128.5,35.1 129.0,32.5 129.5,30.1 130.0,27.9 130.5,25.8 131.0,23.9 131.5,22.2 132.0,20.6 132.5,19.2 133.0,17.9 133.5,16.8 134.0,15.9 134.5,15.2 135.0,14.6 135.5,14.2 136.0,14.0 136.5,14.0 137.0,14.1 137.5,14.4 138.0,14.9 138.5,15.5 139.0,16.4 139.5,17.4 140.0,18.5 140.5,19.9 141.0,21.4 141.5,23.0 142.0,24.8 142.5,26.8 143.0,29.0 143.5,31.3 144.0,33.8 144.5,36.4 145.0,39.2 145.5,42.1 146.0,45.2 146.5,48.5 147.0,51.8 147.5,55.3 148.0,59.0 148.5,62.8 149.0,66.7 149.5,70.7 150.0,74.9 150.5,79.2 151.0,83.6 151.5,88.1 152.0,92.7 152.5,97.4 153.0,102.2 153.5,107.2 154.0,112.2 154.5,117.3 155.0,122.4 155.5,127.7 156.0,133.0 156.5,138.4 157.0,143.8 157.5,149.4 158.0,154.9 158.5,160.5 159.0,166.2 159.5,171.9 160.0,177.6 160.5,183.4 161.0,189.2 161.5,195.0 162.0,200.8 162.5,206.6 163.0,212.4 163.5,218.2 164.0,224.0 164.5,229.8 165.0,235.6 165.5,241.4 166.0,247.1 166.5,252.8 167.0,258.5 167.5,264.1 168.0,269.6 168.5,275.2 169.0,280.6 169.5,286.0 170.0,291.3 170.5,296.6 171.0,301.7 171.5,306.8 172.0,311.8 172.5,316.8 173.0,321.6 173.5,326.3 174.0,330.9 174.5,335.4 175.0,339.8 175.5,344.1 176.0,348.3 176.5,352.3 177.0,356.2 177.5,360.0 178.0,363.7 178.5,367.2 179.0,370.5 179.5,373.8 180.0,376.9 180.5,379.8 181.0,382.6 181.5,385.2 182.0,387.7 182.5,390.0 183.0,392.2 183.5,394.2 184.0,396.0 184.5,397.6 185.0,399.1 185.5,400.5 186.0,401.6 186.5,402.6 187.0,403.5 187.5,404.1 188.0,404.6 188.5,404.9 189.0,405.0 189.5,405.0 190.0,404.8 190.5,404.4 191.0,403.8 191.5,403.1 192.0,402.2 192.5,401.1 193.0,399.8 193.5,398.4 194.0,396.8 194.5,395.1 195.0,393.2 195.5,391.1 196.0,388.9 196.5,386.5 197.0,383.9 197.5,381.2 198.0,378.3 198.5,375.3 199.0,372.2 199.5,368.9 200.0,365.4 200.5,361.8 201.0,358.1 201.5,354.3 202.0,350.3 202.5,346.2 203.0,342.0 203.5,337.6 204.0,333.2 204.5,328.6 205.0,324.0 205.5,319.2 206.0,314.3 206.5,309.4 207.0,304.3 207.5,299.2 208.0,294.0 208.5,288.7 209.0,283.3 209.5,277.9 210.0,272.4 210.5,266.9 211.0,261.3 211.5,255.6 212.0,250.0 212.5,244.2 213.0,238.5 213.5,232.7 214.0,226.9 214.5,221.1 215.0,215.3 215.5,209.5 216.0,203.7 216.5,197.9 217.0,192.1 217.5,186.3 218.0,180.5 218.5,174.8 219.0,169.0 219.5,163.4 220.0,157.7 220.5,152.1 221.0,146.6 221.5,141.1 222.0,135.7 222.5,130.3 223.0,125.0 223.5,119.8 224.0,114.7 224.5,109.6 225.0,104.7 225.5,99.8 226.0,95.0 226.5,90.4 227.0,85.8 227.5,81.4 228.0,77.0 228.5,72.8 229.0,68.7 229.5,64.7 230.0,60.9 230.5,57.2 231.0,53.6 231.5,50.1 232.0,46.8 232.5,43.7 233.0,40.7 233.5,37.8 234.0,35.1 234.5,32.5 235.0,30.1 235.5,27.9 236.0,25.8 236.5,23.9 237.0,22.2 237.5,20.6 238.0,19.2 238.5,17.9 239.0,16.8 239.5,15.9 240.0,15.2 240.5,14.6 241.0,14.2 241.5,14.0 242.0,14.0 242.5,14.1 243.0,14.4 243.5,14.9 244.0,15.5 244.5,16.4 245.0,17.4 245.5,18.5 246.0,19.9 246.5,21.4 247.0,23.0 247.5,24.8 248.0,26.8 248.5,29.0 249.0,31.3 249.5,33.8 250.0,36.4 250.5,39.2 251.0,42.1 251.5,45.2 252.0,48.5 252.5,51.8 253.0,55.3 253.5,59.0 254.0,62.8 254.5,66.7 255.0,70.7 255.5,74.9 256.0,79.2 256.5,83.6 257.0,88.1 257.5,92.7 258.0,97.4 258.5,102.2 259.0,107.2 259.5,112.2 260.0,117.3 260.5,122.4 261.0,127.7 261.5,133.0 262.0,138.4 262.5,143.8 263.0,149.4 263.5,154.9 264.0,160.5 264.5,166.2 265.0,171.9 265.5,177.6 266.0,183.4 266.5,189.2 267.0,195.0 267.5,200.8 268.0,206.6 268.5,212.4 269.0,218.2 269.5,224.0 270.0,229.8 270.5,235.6 271.0,241.4 271.5,247.1 272.0,252.8 272.5,258.5 273.0,264.1 273.5,269.6 274.0,275.2 274.5,280.6 275.0,286.0 275.5,291.3 276.0,296.6 276.5,301.7 277.0,306.8 277.5,311.8 278.0,316.8 278.5,321.6 279.0,326.3 279.5,330.9 280.0,335.4 280.5,339.8 281.0,344.1 281.5,348.3 282.0,352.3 282.5,356.2 283.0,360.0 283.5,363.7 284.0,367.2 284.5,370.5 285.0,373.8 285.5,376.9 286.0,379.8 286.5,382.6 287.0,385.2 287.5,387.7 288.0,390.0 288.5,392.2 289.0,394.2 289.5,396.0 290.0,397.6 290.5,399.1 291.0,400.5 291.5,401.6 292.0,402.6 292.5,403.5 293.0,404.1 293.5,404.6 294.0,404.9 294.5,405.0 295.0,405.0 295.5,404.8 296.0,404.4 296.5,403.8 297.0,403.1 297.5,402.2 298.0,401.1 298.5,399.8 299.0,398.4 299.5,396.8 300.0,395.1 300.5,393.2 301.0,391.1 301.5,388.9 302.0,386.5 302.5,383.9 303.0,381.2 303.5,378.3 304.0,375.3 304.5,372.2 305.0,368.9 305.5,365.4 306.0,361.8 306.5,358.1 307.0,354.3 307.5,350.3 308.0,346.2 308.5,342.0 309.0,337.6 309.5,333.2 310.0,328.6 310.5,324.0 311.0,319.2 311.5,314.3 312.0,309.4 312.5,304.3 313.0,299.2 313.5,294.0 314.0,288.7 314.5,283.3 315.0,277.9 315.5,272.4 316.0,266.9 316.5,261.3 317.0,255.6 317.5,250.0 318.0,244.2 318.5,238.5 319.0,232.7 319.5,226.9 320.0,221.1 320.5,215.3 321.0,209.5 321.5,203.7 322.0,197.9 322.5,192.1 323.0,186.3 323.5,180.5 324.0,174.8 324.5,169.0 325.0,163.4 325.5,157.7 326.0,152.1 326.5,146.6 327.0,141.1 327.5,135.7 328.0,130.3 328.5,125.0 329.0,119.8 329.5,114.7 330.0,109.6 330.5,104.7 331.0,99.8 331.5,95.0 332.0,90.4 332.5,85.8 333.0,81.4 333.5,77.0 334.0,72.8 334.5,68.7 335.0,64.7 335.5,60.9 336.0,57.2 336.5,53.6 337.0,50.1 337.5,46.8 338.0,43.7 338.5,40.7 339.0,37.8 339.5,35.1 340.0,32.5 340.5,30.1 341.0,27.9 341.5,25.8 342.0,23.9 342.5,22.2 343.0,20.6 343.5,19.2 344.0,17.9 344.5,16.8 345.0,15.9 345.5,15.2 346.0,14.6 346.5,14.2 347.0,14.0 347.5,14.0 348.0,14.1 348.5,14.4 349.0,14.9 349.5,15.5 350.0,16.4 350.5,17.4 351.0,18.5 351.5,19.9 352.0,21.4 352.5,23.0 353.0,24.8 353.5,26.8 354.0,29.0 354.5,31.3 355.0,33.8 355.5,36.4 356.0,39.2 356.5,42.1 357.0,45.2 357.5,48.5 358.0,51.8 358.5,55.3 359.0,59.0 359.5,62.8 360.0,66.7 360.5,70.7 361.0,74.9 361.5,79.2 362.0,83.6 362.5,88.1 363.0,92.7 363.5,97.4 364.0,102.2 364.5,107.2 365.0,112.2 365.5,117.3 366.0,122.4 366.5,127.7 367.0,133.0 367.5,138.4 368.0,143.8 368.5,149.4 369.0,154.9 369.5,160.5 370.0,166.2 370.5,171.9 371.0,177.6 371.5,183.4 372.0,189.2 372.5,195.0 373.0,200.8 373.5,206.6 374.0,212.4 374.5,218.2 375.0,224.0 375.5,229.8 376.0,235.6 376.5,241.4 377.0,247.1 377.5,252.8 378.0,258.5 378.5,264.1 379.0,269.6 379.5,275.2 380.0,280.6 380.5,286.0 381.0,291.3 381.5,296.6 382.0,301.7 382.5,306.8 383.0,311.8 383.5,316.8 384.0,321.6 384.5,326.3 385.0,330.9 385.5,335.4 386.0,339.8 386.5,344.1 387.0,348.3 387.5,352.3 388.0,356.2 388.5,360.0 389.0,363.7 389.5,367.2 390.0,370.5 390.5,373.8 391.0,376.9 391.5,379.8 392.0,382.6 392.5,385.2 393.0,387.7 393.5,390.0 394.0,392.2 394.5,394.2 395.0,396.0 395.5,397.6 396.0,399.1 396.5,400.5 397.0,401.6 397.5,402.6 398.0,403.5 398.5,404.1 399.0,404.6 399.5,404.9 400.0,405.0 400.5,405.0 401.0,404.8 401.5,404.4 402.0,403.8 402.5,403.1 403.0,402.2 403.5,401.1 404.0,399.8 404.5,398.4 405.0,396.8 405.5,395.1 406.0,393.2 406.5,391.1 407.0,388.9 407.5,386.5 408.0,383.9 408.5,381.2 409.0,378.3 409.5,375.3 410.0,372.2 410.5,368.9 411.0,365.4 411.5,361.8 412.0,358.1 412.5,354.3 413.0,350.3 413.5,346.2 414.0,342.0 414.5,337.6 415.0,333.2 415.5,328.6 416.0,324.0 416.5,319.2 417.0,314.3 417.5,309.4 418.0,304.3 418.5,299.2 419.0,294.0 419.5,288.7 420.0,283.3 420.5,277.9 421.0,272.4 421.5,266.9 422.0,261.3 422.5,255.6 423.0,250.0 423.5,244.2 424.0,238.5 424.5,232.7 425.0,226.9 425.5,221.1 426.0,215.3 426.5,209.5 427.0,203.7 427.5,197.9 428.0,192.1 428.5,186.3 429.0,180.5 429.5,174.8 430.0,169.0 430.5,163.4 431.0,157.7 431.5,152.1 432.0,146.6 432.5,141.1 433.0,135.7 433.5,130.3 434.0,125.0 434.5,119.8 435.0,114.7 435.5,109.6 436.0,104.7 436.5,99.8 437.0,95.0 437.5,90.4 438.0,85.8 438.5,81.4 439.0,77.0 439.5,72.8 440.0,68.7 440.5,64.7 441.0,60.9 441.5,57.2 442.0,53.6 442.5,50.1 443.0,46.8 443.5,43.7 444.0,40.7 444.5,37.8 445.0,35.1 445.5,32.5 446.0,30.1 446.5,27.9 447.0,25.8 447.5,23.9 448.0,22.2 448.5,20.6 449.0,19.2 449.5,17.9 450.0,16.8 450.5,15.9 451.0,15.2 451.5,14.6 452.0,14.2 452.5,14.0 453.0,14.0 453.5,14.1 454.0,14.4 454.5,14.9 455.0,15.5 455.5,16.4 456.0,17.4 456.5,18.5 457.0,19.9 457.5,21.4 458.0,23.0 458.5,24.8 459.0,26.8 459.5,29.0 460.0,31.3 460.5,33.8 461.0,36.4 461.5,39.2 462.0,42.1 462.5,45.2 463.0,48.5 463.5,51.8 464.0,55.3 464.5,59.0 465.0,62.8 465.5,66.7 466.0,70.7 466.5,74.9 467.0,79.2 467.5,83.6 468.0,88.1 468.5,92.7 469.0,97.4 469.5,102.2 470.0,107.2 470.5,112.2 471.0,117.3 471.5,122.4 472.0,127.7 472.5,133.0 473.0,138.4 473.5,143.8 474.0,149.4 474.5,154.9 475.0,160.5 475.5,166.2 476.0,171.9 476.5,177.6 477.0,183.4 477.5,189.2 478.0,195.0 478.5,200.8 479.0,206.6 479.5,212.4 480.0,218.2 480.5,224.0 481.0,229.8 481.5,235.6 482.0,241.4 482.5,247.1 483.0,252.8 483.5,258.5 484.0,264.1 484.5,269.6 485.0,275.2 485.5,280.6 486.0,286.0 486.5,291.3 487.0,296.6 487.5,301.7 488.0,306.8 488.5,311.8 489.0,316.8 489.5,321.6 490.0,326.3 490.5,330.9 491.0,335.4 491.5,339.8 492.0,344.1 492.5,348.3 493.0,352.3 493.5,356.2 494.0,360.0 494.5,363.7 495.0,367.2 495.5,370.5 496.0,373.8 496.5,376.9 497.0,379.8 497.5,382.6 498.0,385.2 498.5,387.7 499.0,390.0 499.5,392.2 500.0,394.2 500.5,396.0 501.0,397.6 501.5,399.1 502.0,400.5 502.5,401.6 503.0,402.6 503.5,403.5 504.0,404.1 504.5,404.6 505.0,404.9 505.5,405.0 506.0,405.0 506.5,404.8 507.0,404.4 507.5,403.8 508.0,403.1 508.5,402.2 509.0,401.1 509.5,399.8 510.0,398.4 510.5,396.8 511.0,395.1 511.5,393.2 512.0,391.1 512.5,388.9 513.0,386.5 513.5,383.9 514.0,381.2 514.5,378.3 515.0,375.3 515.5,372.2 516.0,368.9 516.5,365.4 517.0,361.8 517.5,358.1 518.0,354.3 518.5,350.3 519.0,346.2 519.5,342.0 520.0,337.6 520.5,333.2 521.0,328.6 521.5,324.0 522.0,319.2 522.5,314.3 523.0,309.4 523.5,304.3 524.0,299.2 524.5,294.0 525.0,288.7 525.5,283.3 526.0,277.9 526.5,272.4 527.0,266.9 527.5,261.3 528.0,255.6 528.5,250.0 529.0,244.2 529.5,238.5 530.0,232.7 530.5,226.9 531.0,221.1 531.5,215.3 532.0,209.5 532.5,203.7 533.0,197.9 533.5,192.1 534.0,186.3 534.5,180.5 535.0,174.8 535.5,169.0 536.0,163.4 536.5,157.7 537.0,152.1 537.5,146.6 538.0,141.1 538.5,135.7 539.0,130.3" fill="none" stroke="#9a0000" stroke-width="1.2"/></svg>
<div class="t" style="left:203.0px;top:424px;width:60px;text-align:center;font-size:11px;line-height:11px;letter-spacing:-0.3px">16250</div>
<div class="t" style="left:254.39999999999998px;top:424px;width:60px;text-align:center;font-size:11px;line-height:11px;letter-spacing:-0.3px">16900</div>
<div class="t" style="left:305.8px;top:424px;width:60px;text-align:center;font-size:11px;line-height:11px;letter-spacing:-0.3px">17550</div>
<div class="t" style="left:357.2px;top:424px;width:60px;text-align:center;font-size:11px;line-height:11px;letter-spacing:-0.3px">18200</div>
<div class="t" style="left:408.6px;top:424px;width:60px;text-align:center;font-size:11px;line-height:11px;letter-spacing:-0.3px">18850</div>
<div class="t" style="left:460.0px;top:424px;width:60px;text-align:center;font-size:11px;line-height:11px;letter-spacing:-0.3px">19500</div>
<div class="t" style="left:511.4px;top:424px;width:60px;text-align:center;font-size:11px;line-height:11px;letter-spacing:-0.3px">20150</div>
<div class="t" style="left:562.8px;top:424px;width:60px;text-align:center;font-size:11px;line-height:11px;letter-spacing:-0.3px">20800</div>
<div class="t" style="left:614.2px;top:424px;width:60px;text-align:center;font-size:11px;line-height:11px;letter-spacing:-0.3px">21450</div>
<div class="t" style="left:665.5999999999999px;top:424px;width:60px;text-align:center;font-size:11px;line-height:11px;letter-spacing:-0.3px">22100</div>
<div class="t" style="left:138px;top:477px;width:40px;text-align:right;font-size:11px;line-height:11px;letter-spacing:-0.3px">0.8</div>
<div class="t" style="left:138px;top:519px;width:40px;text-align:right;font-size:11px;line-height:11px;letter-spacing:-0.3px">0.6</div>
<div class="t" style="left:138px;top:560px;width:40px;text-align:right;font-size:11px;line-height:11px;letter-spacing:-0.3px">0.4</div>
<div class="t" style="left:138px;top:602px;width:40px;text-align:right;font-size:11px;line-height:11px;letter-spacing:-0.3px">0.2</div>
<div class="t" style="left:138px;top:643px;width:40px;text-align:right;font-size:11px;line-height:11px;letter-spacing:-0.3px">0</div>
<div class="t" style="left:138px;top:685px;width:40px;text-align:right;font-size:11px;line-height:11px;letter-spacing:-0.3px">-0.2</div>
<div class="t" style="left:138px;top:727px;width:40px;text-align:right;font-size:11px;line-height:11px;letter-spacing:-0.3px">-0.4</div>
<div class="t" style="left:138px;top:768px;width:40px;text-align:right;font-size:11px;line-height:11px;letter-spacing:-0.3px">-0.6</div>
<div class="t" style="left:138px;top:810px;width:40px;text-align:right;font-size:11px;line-height:11px;letter-spacing:-0.3px">-0.8</div>
<div style="left:900px;top:306px;width:696px;height:592px;background:#f4f4f4;border:1px solid #6a6a6a;box-sizing:border-box"></div>
<div style="left:901px;top:307px;width:694px;height:16px;background:linear-gradient(#d48080,#b84a4a 45%,#960c0c 85%,#8c0000)"></div>
<div class="t" style="left:900.0px;top:309.6px;width:696px;text-align:center;font-size:11.5px;line-height:11.5px;font-weight:bold;color:#fff;letter-spacing:-0.1px">Graph</div>
<div style="left:916px;top:323px;width:1px;height:574px;background:#7a7a7a"></div>
<svg style="left:1586px;top:889px" width="7" height="7" shape-rendering="crispEdges"><rect x="5" y="0" width="1" height="6" fill="#000"/><rect x="0" y="5" width="6" height="1" fill="#000"/></svg>
<div style="left:901px;top:328px;width:6px;height:7px;background:linear-gradient(#6a1a6a,#e070e0);border-top:1px solid #101010;border-right:1px solid #303030;box-sizing:border-box"></div>
<div style="left:901px;top:340px;width:6px;height:7px;background:linear-gradient(#1f6f1f,#6fd86f);border-top:1px solid #101010;border-right:1px solid #303030;box-sizing:border-box"></div>
<div style="left:901px;top:352px;width:6px;height:7px;background:linear-gradient(#505050,#b8b8b8);border-top:1px solid #101010;border-right:1px solid #303030;box-sizing:border-box"></div>
<div style="left:901px;top:364px;width:6px;height:7px;background:linear-gradient(#505050,#b8b8b8);border-top:1px solid #101010;border-right:1px solid #303030;box-sizing:border-box"></div>
<div style="left:901px;top:376px;width:6px;height:7px;background:linear-gradient(#505050,#b8b8b8);border-top:1px solid #101010;border-right:1px solid #303030;box-sizing:border-box"></div>
<div style="left:924px;top:330px;width:664px;height:28px;border:1px solid #a8a8a8;border-radius:4px;box-sizing:border-box"></div>
<div style="left:984px;top:333px;width:1px;height:22px;background:#000"></div>
<div style="left:1044px;top:333px;width:1px;height:22px;background:#000"></div>
<div style="left:1104px;top:333px;width:1px;height:22px;background:#000"></div>
<div style="left:1164px;top:333px;width:1px;height:22px;background:#000"></div>
<div style="left:1196px;top:332px;width:24px;height:24px;background:#ffe0e0;border:1px solid #8b0000;box-shadow:inset 0 0 0 1px #fff;box-sizing:border-box"></div>
<svg style="left:932px;top:337px" width="16" height="16" shape-rendering="crispEdges"><rect x="0" y="0" width="15" height="15" fill="#fff"/><rect x="6" y="1" width="8" height="3" fill="#00f"/><rect x="0" y="8" width="14" height="1" fill="#c0c0c0"/><rect x="0" y="11" width="14" height="1" fill="#c0c0c0"/><rect x="9" y="4" width="1" height="10" fill="#c0c0c0"/><rect x="12" y="4" width="1" height="10" fill="#c0c0c0"/><path d="M2 13.5 L9 6" stroke="#800080" stroke-width="1" stroke-dasharray="1,1" fill="none" shape-rendering="auto"/><path d="M9.5 6 L10 10 L12 13 L14 13.5" stroke="#f00" stroke-width="1.2" fill="none" shape-rendering="auto"/><path d="M1 11 L4 8 L8 6 L10 5.5 L14 5.5" stroke="#00f" stroke-width="1.3" fill="none" stroke-dasharray="2,1" shape-rendering="auto"/><path d="M1 1.5 L7 7.5 M7 1.5 L1 7.5 M4 0.5 L4 8.5 M0.5 4.5 L8 4.5" stroke="#ff0" stroke-width="1.5" shape-rendering="auto"/><rect x="14" y="0" width="1" height="15" fill="#000"/><rect x="0" y="14" width="15" height="1" fill="#000"/></svg>
<svg style="left:960px;top:337px" width="16" height="16" shape-rendering="crispEdges"><rect x="0" y="0" width="15" height="15" fill="#fff"/><rect x="0" y="1" width="14" height="3" fill="#00f"/><rect x="1" y="5" width="2" height="1" fill="#999"/><rect x="10" y="5" width="4" height="1" fill="#999"/><rect x="2" y="8" width="4" height="1" fill="#777"/><rect x="7" y="7" width="6" height="3" fill="#a0a0a0"/><rect x="8" y="8" width="4" height="1" fill="#ff0"/><rect x="2" y="11" width="11" height="1" fill="#777"/><rect x="0" y="0" width="1" height="14" fill="#bbb"/><rect x="14" y="0" width="1" height="15" fill="#000"/><rect x="0" y="14" width="15" height="1" fill="#000"/></svg>
<svg style="left:994px;top:337px" width="16" height="16" shape-rendering="crispEdges"><rect x="0.5" y="1.5" width="10" height="11" fill="#fff" stroke="#8c8c8c" stroke-width="1"/><rect x="2" y="4" width="7" height="1" fill="#000"/><rect x="2" y="7" width="7" height="1" fill="#000"/><rect x="2" y="10" width="7" height="1" fill="#000"/></svg>
<svg style="left:1020px;top:337px" width="16" height="16" shape-rendering="crispEdges"><rect x="0.5" y="0.5" width="14" height="14" fill="#fff" stroke="#888" stroke-width="1"/><rect x="1" y="7" width="3" height="1" fill="#000"/><rect x="5" y="7" width="2" height="1" fill="#000"/><rect x="8" y="7" width="2" height="1" fill="#000"/><rect x="11" y="7" width="3" height="1" fill="#000"/><rect x="7" y="8" width="1" height="6" fill="#000"/><rect x="6" y="9" width="3" height="1" fill="#000"/><rect x="6" y="12" width="3" height="1" fill="#000"/></svg>
<svg style="left:1052px;top:337px" width="16" height="16" shape-rendering="crispEdges"><rect x="0" y="0" width="14" height="14" fill="#444"/><rect x="1" y="1" width="12" height="12" fill="#a6a62c"/><rect x="3" y="1" width="8" height="6" fill="#444"/><rect x="3" y="1" width="8" height="5" fill="#d8d8d8"/><rect x="3" y="9" width="8" height="5" fill="#444"/><rect x="8" y="10" width="2" height="3" fill="#eee"/></svg>
<svg style="left:1080px;top:337px" width="16" height="16" shape-rendering="crispEdges"><path d="M4.5 2.5 L12 2.5 L14.5 5 L14.5 13.5 L4.5 13.5 Z" fill="#fff" stroke="#a0a0a0" stroke-width="1"/><path d="M12 2.5 L12 5 L14.5 5" fill="#bbb" stroke="#999" stroke-width="1"/><rect x="6" y="5" width="5" height="1" fill="#000"/><rect x="6" y="8" width="7" height="1" fill="#000"/><path d="M0.8 8 Q1 11.5 3.5 11.5 L6 11.5 M4.5 9.8 L6.3 11.5 L4.5 13.2" stroke="#000" stroke-width="1.2" fill="none" shape-rendering="auto"/></svg>
<svg style="left:1112px;top:337px" width="16" height="16" shape-rendering="crispEdges"><rect x="0.5" y="0.5" width="14" height="14" fill="#fff" stroke="#999" stroke-width="1"/><path d="M3 3 L12 12 M12 3 L3 12 M7.5 2 L7.5 13 M2 7.5 L13 7.5" stroke="#ff0" stroke-width="1.6" shape-rendering="auto"/></svg>
<svg style="left:1140px;top:337px" width="16" height="16" shape-rendering="crispEdges"><rect x="0.5" y="0.5" width="14" height="14" fill="#fff" stroke="#999" stroke-width="1"/><rect x="1" y="5" width="10" height="1" fill="#00f"/><rect x="1" y="9" width="10" height="1" fill="#00f"/><rect x="12" y="5" width="2" height="1" fill="#00f"/><rect x="12" y="9" width="2" height="1" fill="#00f"/><rect x="5" y="1" width="1" height="10" fill="#00f"/><rect x="9" y="1" width="1" height="10" fill="#00f"/><rect x="5" y="12" width="1" height="2" fill="#00f"/><rect x="9" y="12" width="1" height="2" fill="#00f"/><rect x="6" y="6" width="3" height="3" fill="#bbb"/></svg>
<svg style="left:1172px;top:337px" width="16" height="16" shape-rendering="crispEdges"><rect x="0.5" y="0.5" width="14" height="14" fill="#fff" stroke="#999" stroke-width="1"/><rect x="5" y="5" width="5" height="5" fill="#bbb" stroke="#00f" stroke-width="1"/><rect x="7" y="1" width="1" height="4" fill="#000"/><rect x="7" y="10" width="1" height="4" fill="#000"/><rect x="1" y="7" width="4" height="1" fill="#000"/><rect x="10" y="7" width="4" height="1" fill="#000"/><rect x="6" y="2" width="3" height="1" fill="#000"/><rect x="6" y="12" width="3" height="1" fill="#000"/><rect x="2" y="6" width="1" height="3" fill="#000"/><rect x="12" y="6" width="1" height="3" fill="#000"/></svg>
<svg style="left:1200px;top:337px" width="16" height="16" shape-rendering="crispEdges"><rect x="0.5" y="0.5" width="14" height="14" fill="#fff" stroke="#999" stroke-width="1"/><rect x="6" y="1" width="3" height="13" fill="#bbb"/><rect x="5" y="1" width="1" height="13" fill="#00f"/><rect x="9" y="1" width="1" height="13" fill="#00f"/><rect x="1" y="7" width="4" height="1" fill="#000"/><rect x="10" y="7" width="4" height="1" fill="#000"/><rect x="2" y="6" width="1" height="3" fill="#000"/><rect x="12" y="6" width="1" height="3" fill="#000"/></svg>
<svg style="left:1228px;top:337px" width="16" height="16" shape-rendering="crispEdges"><rect x="0.5" y="0.5" width="14" height="14" fill="#fff" stroke="#999" stroke-width="1"/><rect x="1" y="6" width="13" height="3" fill="#bbb"/><rect x="1" y="5" width="13" height="1" fill="#00f"/><rect x="1" y="9" width="13" height="1" fill="#00f"/><rect x="7" y="1" width="1" height="4" fill="#000"/><rect x="7" y="10" width="1" height="4" fill="#000"/><rect x="6" y="2" width="3" height="1" fill="#000"/><rect x="6" y="12" width="3" height="1" fill="#000"/></svg>
<div style="left:924px;top:366px;width:230px;height:516px;background:#d3d3d3;border:1px solid #6a6a6a;box-sizing:border-box"></div>
<div style="left:1156px;top:366px;width:432px;height:516px;background:#d3d3d3;border:1px solid #6a6a6a;box-sizing:border-box"></div>
<div style="left:1248px;top:894px;width:16px;height:1px;background:#000"></div>
<svg style="left:1166px;top:377px" width="12" height="12"><defs><radialGradient id="g1172" cx="0.4" cy="0.35" r="0.6"><stop offset="0" stop-color="#e0ffe0"/><stop offset="0.45" stop-color="#50f050"/><stop offset="1" stop-color="#10a010"/></radialGradient></defs><circle cx="6" cy="6" r="5" fill="url(#g1172)"/></svg>
<div style="left:928px;top:363px;width:225px;height:395px;border:4px solid #00662e;box-sizing:border-box;box-shadow:2px 2px 1px rgba(0,0,0,.25), inset 2px 2px 2px rgba(0,0,0,.28)"></div>
<div style="left:933px;top:371px;width:9px;height:9px;background:#fff;border:1px solid #999;box-sizing:border-box"></div>
<div style="left:935px;top:375px;width:5px;height:1px;background:#00f"></div>
<svg style="left:942px;top:375px" width="6" height="1" shape-rendering="crispEdges"><line x1="0" y1="0.5" x2="6" y2="0.5" stroke="#777" stroke-dasharray="1,1"/></svg>
<div class="t" style="left:949px;top:369px;font-size:11px;line-height:11px;color:#9c0a28">Input 1</div>
<svg style="left:956px;top:383px" width="10" height="364" shape-rendering="crispEdges"><line x1="0.5" y1="0" x2="0.5" y2="361" stroke="#888" stroke-dasharray="1,1"/><line x1="1" y1="8.5" x2="9" y2="8.5" stroke="#888" stroke-dasharray="1,1"/><line x1="1" y1="24.5" x2="9" y2="24.5" stroke="#888" stroke-dasharray="1,1"/><line x1="1" y1="40.5" x2="9" y2="40.5" stroke="#888" stroke-dasharray="1,1"/><line x1="1" y1="56.5" x2="9" y2="56.5" stroke="#888" stroke-dasharray="1,1"/><line x1="1" y1="72.5" x2="9" y2="72.5" stroke="#888" stroke-dasharray="1,1"/><line x1="1" y1="88.5" x2="9" y2="88.5" stroke="#888" stroke-dasharray="1,1"/><line x1="1" y1="104.5" x2="9" y2="104.5" stroke="#888" stroke-dasharray="1,1"/><line x1="1" y1="120.5" x2="9" y2="120.5" stroke="#888" stroke-dasharray="1,1"/><line x1="1" y1="136.5" x2="9" y2="136.5" stroke="#888" stroke-dasharray="1,1"/><line x1="1" y1="152.5" x2="9" y2="152.5" stroke="#888" stroke-dasharray="1,1"/><line x1="1" y1="168.5" x2="9" y2="168.5" stroke="#888" stroke-dasharray="1,1"/><line x1="1" y1="184.5" x2="9" y2="184.5" stroke="#888" stroke-dasharray="1,1"/><line x1="1" y1="200.5" x2="9" y2="200.5" stroke="#888" stroke-dasharray="1,1"/><line x1="1" y1="216.5" x2="9" y2="216.5" stroke="#888" stroke-dasharray="1,1"/><line x1="1" y1="232.5" x2="9" y2="232.5" stroke="#888" stroke-dasharray="1,1"/><line x1="1" y1="248.5" x2="9" y2="248.5" stroke="#888" stroke-dasharray="1,1"/><line x1="1" y1="264.5" x2="9" y2="264.5" stroke="#888" stroke-dasharray="1,1"/><line x1="1" y1="280.5" x2="9" y2="280.5" stroke="#888" stroke-dasharray="1,1"/><line x1="1" y1="296.5" x2="9" y2="296.5" stroke="#888" stroke-dasharray="1,1"/><line x1="1" y1="312.5" x2="9" y2="312.5" stroke="#888" stroke-dasharray="1,1"/><line x1="1" y1="328.5" x2="9" y2="328.5" stroke="#888" stroke-dasharray="1,1"/><line x1="1" y1="344.5" x2="9" y2="344.5" stroke="#888" stroke-dasharray="1,1"/><line x1="1" y1="360.5" x2="9" y2="360.5" stroke="#888" stroke-dasharray="1,1"/></svg>
<div class="t" style="left:968px;top:386px;font-size:11px;line-height:11px;letter-spacing:-0.2px">Date = 12/7/2023</div>
<div class="t" style="left:968px;top:402px;font-size:11px;line-height:11px;letter-spacing:-0.2px">Time = 10:20:53 AM</div>
<div class="t" style="left:968px;top:418px;font-size:11px;line-height:11px;letter-spacing:-0.2px">Sample Frequency = 1.33 MHz</div>
<div class="t" style="left:968px;top:434px;font-size:11px;line-height:11px;letter-spacing:-0.2px">Samples = 42560</div>
<div class="t" style="left:968px;top:450px;font-size:11px;line-height:11px;letter-spacing:-0.2px">SNR = 77.741 dB</div>
<div class="t" style="left:968px;top:466px;font-size:11px;line-height:11px;letter-spacing:-0.2px">SNRFS = 78.276 dB</div>
<div class="t" style="left:968px;top:482px;font-size:11px;line-height:11px;letter-spacing:-0.2px">SINAD = 77.739 dBc</div>
<div class="t" style="left:968px;top:498px;font-size:11px;line-height:11px;letter-spacing:-0.2px">DC Frequency = 0 MHz</div>
<div class="t" style="left:968px;top:514px;font-size:11px;line-height:11px;letter-spacing:-0.2px">DC Power = -50.48 dBFS</div>
<div class="t" style="left:968px;top:530px;font-size:11px;line-height:11px;letter-spacing:-0.2px">Fund Frequency = 0.001 MHz</div>
<div class="t" style="left:968px;top:546px;font-size:11px;line-height:11px;letter-spacing:-0.2px">Fund Power = -0.535 dBFS</div>
<div class="t" style="left:968px;top:562px;font-size:11px;line-height:11px;letter-spacing:-0.2px">Fund Bins = 21</div>
<div class="t" style="left:968px;top:578px;font-size:11px;line-height:11px;letter-spacing:-0.2px">Harm 2 Power = -114.629 dBc</div>
<div class="t" style="left:968px;top:594px;font-size:11px;line-height:11px;letter-spacing:-0.2px">Harm 3 Power = -117.035 dBc</div>
<div class="t" style="left:968px;top:610px;font-size:11px;line-height:11px;letter-spacing:-0.2px">Harm 4 Power = -121.202 dBc</div>
<div class="t" style="left:968px;top:626px;font-size:11px;line-height:11px;letter-spacing:-0.2px">Harm 5 Power = -116.306 dBc</div>
<div class="t" style="left:968px;top:642px;font-size:11px;line-height:11px;letter-spacing:-0.2px">Harm 6 Power = -122.819 dBc</div>
<div class="t" style="left:968px;top:658px;font-size:11px;line-height:11px;letter-spacing:-0.2px">Worst Other Frequency = 0.119 MHz</div>
<div class="t" style="left:968px;top:674px;font-size:11px;line-height:11px;letter-spacing:-0.2px">Worst Other Power = -100.185 dBFS</div>
<div class="t" style="left:968px;top:690px;font-size:11px;line-height:11px;letter-spacing:-0.2px">Noise / Hz = -136.505 dBFS / Hz</div>
<div class="t" style="left:968px;top:706px;font-size:11px;line-height:11px;letter-spacing:-0.2px">Average Bin Noise = -121.556 dBFS</div>
<div class="t" style="left:968px;top:722px;font-size:11px;line-height:11px;letter-spacing:-0.2px">THD = -110.436 dBc</div>
<div class="t" style="left:968px;top:738px;font-size:11px;line-height:11px;letter-spacing:-0.2px">SFDR = 99.65 dBc</div>
<div style="left:1221px;top:406px;width:342px;height:451px;background:#fff;border-left:1px solid #a4a4a4;border-top:1px solid #a4a4a4;border-right:1px solid #e8e8e8;border-bottom:1px solid #e8e8e8;box-shadow:inset 1px 1px 0 #6e6e6e;box-sizing:border-box"></div>
<svg style="left:1222px;top:407px" width="341" height="449"><rect x="59" y="170.0" width="7" height="279.0" fill="#ffc0cb"/><rect x="84" y="29.4" width="23" height="419.6" fill="#ffc0cb"/><rect x="128" y="340.2" width="7" height="108.8" fill="#ffc0cb"/><rect x="165" y="348.6" width="6" height="100.4" fill="#ffc0cb"/><rect x="201" y="344.4" width="6" height="104.6" fill="#ffc0cb"/><rect x="237" y="341.6" width="7" height="107.4" fill="#ffc0cb"/><rect x="273" y="354.2" width="7" height="94.8" fill="#ffc0cb"/><line x1="0" x2="340" y1="29.5" y2="29.5" stroke="#808080"/><line x1="0" x2="340" y1="71.5" y2="71.5" stroke="#b9b9b9"/><line x1="0" x2="340" y1="113.5" y2="113.5" stroke="#b9b9b9"/><line x1="0" x2="340" y1="155.5" y2="155.5" stroke="#b9b9b9"/><line x1="0" x2="340" y1="197.5" y2="197.5" stroke="#b9b9b9"/><line x1="0" x2="340" y1="239.5" y2="239.5" stroke="#b9b9b9"/><line x1="0" x2="340" y1="281.5" y2="281.5" stroke="#b9b9b9"/><line x1="0" x2="340" y1="323.5" y2="323.5" stroke="#b9b9b9"/><line x1="0" x2="340" y1="365.5" y2="365.5" stroke="#b9b9b9"/><line x1="0" x2="340" y1="407.5" y2="407.5" stroke="#b9b9b9"/><line x1="27.5" x2="27.5" y1="2" y2="6" stroke="#b0b0b0"/><line x1="27.5" x2="27.5" y1="444" y2="449" stroke="#b0b0b0"/><line x1="60.5" x2="60.5" y1="2" y2="6" stroke="#b0b0b0"/><line x1="60.5" x2="60.5" y1="444" y2="449" stroke="#b0b0b0"/><line x1="92.5" x2="92.5" y1="2" y2="6" stroke="#b0b0b0"/><line x1="92.5" x2="92.5" y1="444" y2="449" stroke="#b0b0b0"/><line x1="125.5" x2="125.5" y1="2" y2="6" stroke="#b0b0b0"/><line x1="125.5" x2="125.5" y1="444" y2="449" stroke="#b0b0b0"/><line x1="157.5" x2="157.5" y1="2" y2="6" stroke="#b0b0b0"/><line x1="157.5" x2="157.5" y1="444" y2="449" stroke="#b0b0b0"/><line x1="190.5" x2="190.5" y1="2" y2="6" stroke="#b0b0b0"/><line x1="190.5" x2="190.5" y1="444" y2="449" stroke="#b0b0b0"/><line x1="222.5" x2="222.5" y1="2" y2="6" stroke="#b0b0b0"/><line x1="222.5" x2="222.5" y1="444" y2="449" stroke="#b0b0b0"/><line x1="255.5" x2="255.5" y1="2" y2="6" stroke="#b0b0b0"/><line x1="255.5" x2="255.5" y1="444" y2="449" stroke="#b0b0b0"/><line x1="287.5" x2="287.5" y1="2" y2="6" stroke="#b0b0b0"/><line x1="287.5" x2="287.5" y1="444" y2="449" stroke="#b0b0b0"/><line x1="320.5" x2="320.5" y1="2" y2="6" stroke="#b0b0b0"/><line x1="320.5" x2="320.5" y1="444" y2="449" stroke="#b0b0b0"/><line x1="59.5" x2="59.5" y1="0" y2="449" stroke="#808080"/><polyline points="60.0,176.0 61.0,172.0 62.0,213.0 63.0,273.0 64.0,308.0 65.0,321.0 67.0,328.0 69.0,333.0 72.0,355.0 74.0,383.0 76.0,398.0 78.0,401.0 80.0,378.0 81.5,373.0 83.0,358.0 84.0,350.0 86.0,338.0 88.0,331.0 89.0,353.0 91.0,320.0 91.5,233.0 92.0,153.0 93.0,93.0 94.0,59.0 95.5,45.0 96.4,39.0 97.2,45.0 98.0,67.0 99.0,114.0 99.5,193.0 100.0,253.0 100.5,313.0 101.0,328.0 102.0,361.0 103.0,333.0 104.0,328.0 105.0,338.0 107.0,361.0 109.0,363.0 111.0,383.0 113.0,368.0 115.0,375.0 117.0,361.0 119.0,387.0 121.0,403.0 124.0,373.0 126.0,361.0 129.0,341.0 131.0,363.0 133.0,378.0 135.0,371.0 137.0,393.0 139.0,413.0 141.0,383.0 143.0,408.0 145.0,428.0 147.0,393.0 149.0,405.0 150.0,373.0 151.0,375.9 153.0,410.9 154.5,374.8 156.0,381.9 157.5,372.9 159.0,400.7 160.5,361.8 162.0,380.9 165.0,358.5 168.0,422.7 171.0,361.0 173.0,395.7 176.0,376.4 178.0,404.5 180.0,374.6 183.0,387.5 186.0,379.2 189.0,395.4 192.0,359.1 194.0,399.0 196.0,382.7 198.0,392.7 200.5,376.9 202.0,404.1 204.0,380.7 206.5,395.6 208.0,363.6 211.0,385.3 213.0,365.5 216.0,393.5 217.5,361.5 219.5,394.1 221.0,364.5 223.0,389.3 225.5,377.0 228.0,382.6 230.5,375.0 233.5,411.9 235.5,364.3 238.0,396.5 239.5,380.3 242.0,392.0 244.5,360.8 246.5,387.6 249.0,358.2 251.0,405.1 253.0,384.7 256.0,402.3 258.0,373.3 260.0,390.3 262.0,365.7 265.0,380.8 266.5,372.2 269.5,396.4 271.0,371.5 273.5,422.9 275.5,381.9 278.5,424.0 280.0,358.4 283.0,406.7 286.0,374.5 288.0,380.6 290.5,381.6 293.0,379.6 295.5,376.3 297.5,404.5 299.5,371.6 301.5,392.9 304.5,374.9 307.5,381.8 309.5,357.6 311.0,387.9 313.0,359.6 315.0,385.8 318.0,375.8 320.0,390.2 322.0,362.4 324.5,386.7 327.5,371.2 329.0,379.7 331.5,377.7 334.5,380.6 336.5,358.3 338.5,417.8 340.0,373.0" fill="none" stroke="#8b0000" stroke-width="1.1"/></svg>
<div class="t" style="left:1350.0px;top:736px;width:20px;text-align:center;font-size:11px;line-height:11px;color:#ff0000">2</div>
<div class="t" style="left:1386.0px;top:743px;width:20px;text-align:center;font-size:11px;line-height:11px;color:#ff0000">3</div>
<div class="t" style="left:1422.0px;top:739px;width:20px;text-align:center;font-size:11px;line-height:11px;color:#ff0000">4</div>
<div class="t" style="left:1458.0px;top:736px;width:20px;text-align:center;font-size:11px;line-height:11px;color:#ff0000">5</div>
<div class="t" style="left:1494.0px;top:748px;width:20px;text-align:center;font-size:11px;line-height:11px;color:#ff0000">6</div>
<div class="t" style="left:1217.9px;top:392px;width:60px;text-align:center;font-size:11px;line-height:11px;letter-spacing:-0.3px">-900</div>
<div class="t" style="left:1249.5px;top:392px;width:60px;text-align:center;font-size:11px;line-height:11px;letter-spacing:-0.3px">0</div>
<div class="t" style="left:1282.92px;top:392px;width:60px;text-align:center;font-size:11px;line-height:11px;letter-spacing:-0.3px">900</div>
<div class="t" style="left:1315.43px;top:392px;width:60px;text-align:center;font-size:11px;line-height:11px;letter-spacing:-0.3px">1.8 K</div>
<div class="t" style="left:1347.94px;top:392px;width:60px;text-align:center;font-size:11px;line-height:11px;letter-spacing:-0.3px">2.7 K</div>
<div class="t" style="left:1380.45px;top:392px;width:60px;text-align:center;font-size:11px;line-height:11px;letter-spacing:-0.3px">3.6 K</div>
<div class="t" style="left:1412.96px;top:392px;width:60px;text-align:center;font-size:11px;line-height:11px;letter-spacing:-0.3px">4.5 K</div>
<div class="t" style="left:1445.47px;top:392px;width:60px;text-align:center;font-size:11px;line-height:11px;letter-spacing:-0.3px">5.4 K</div>
<div class="t" style="left:1477.98px;top:392px;width:60px;text-align:center;font-size:11px;line-height:11px;letter-spacing:-0.3px">6.3 K</div>
<div class="t" style="left:1510.49px;top:392px;width:60px;text-align:center;font-size:11px;line-height:11px;letter-spacing:-0.3px">7.2 K</div>
<div class="t" style="left:1175px;top:431px;width:40px;text-align:right;font-size:11px;line-height:11px;letter-spacing:-0.3px">0</div>
<div class="t" style="left:1175px;top:473px;width:40px;text-align:right;font-size:11px;line-height:11px;letter-spacing:-0.3px">-15</div>
<div class="t" style="left:1175px;top:515px;width:40px;text-align:right;font-size:11px;line-height:11px;letter-spacing:-0.3px">-30</div>
<div class="t" style="left:1175px;top:557px;width:40px;text-align:right;font-size:11px;line-height:11px;letter-spacing:-0.3px">-45</div>
<div class="t" style="left:1175px;top:599px;width:40px;text-align:right;font-size:11px;line-height:11px;letter-spacing:-0.3px">-60</div>
<div class="t" style="left:1175px;top:641px;width:40px;text-align:right;font-size:11px;line-height:11px;letter-spacing:-0.3px">-75</div>
<div class="t" style="left:1175px;top:683px;width:40px;text-align:right;font-size:11px;line-height:11px;letter-spacing:-0.3px">-90</div>
<div class="t" style="left:1175px;top:725px;width:40px;text-align:right;font-size:11px;line-height:11px;letter-spacing:-0.3px">-105</div>
<div class="t" style="left:1175px;top:767px;width:40px;text-align:right;font-size:11px;line-height:11px;letter-spacing:-0.3px">-120</div>
<div class="t" style="left:1175px;top:809px;width:40px;text-align:right;font-size:11px;line-height:11px;letter-spacing:-0.3px">-135</div>
<div style="left:426px;top:98px;width:276px;height:233px;background:#f0f0f0;border:1px solid #707070;box-sizing:border-box;box-shadow:2px 4px 14px rgba(0,0,0,.28)"></div>
<div style="left:427px;top:99px;width:274px;height:25px;background:#fff"></div>
<div class="t" style="left:430px;top:105px;font-size:12px;line-height:12px;color:#000">Input Formatter Settings</div>
<svg style="left:680px;top:105px" width="12" height="12"><path d="M1 1 L11 11 M11 1 L1 11" stroke="#000" stroke-width="1.1"/></svg>
<div class="t" style="left:437px;top:142px;font-size:11px;line-height:11px;">Number Format:</div>
<div style="left:547px;top:140px;width:144px;height:21px;background:#e1e1e1;border:1px solid #adadad;box-sizing:border-box"></div>
<div class="t" style="left:551px;top:146px;font-size:11px;line-height:11px;color:#000">Two&#39;s Complement</div>
<svg style="left:676px;top:148px" width="10" height="6"><polyline points="0.5,0.5 5,5 9.5,0.5" fill="none" stroke="#333" stroke-width="1.1"/></svg>
<div style="left:439px;top:171px;width:13px;height:13px;background:#fff;border:1px solid #333;box-sizing:border-box"></div>
<svg style="left:439px;top:171px" width="13" height="13"><polyline points="2.5,6.5 5,9.5 10.5,3" fill="none" stroke="#222" stroke-width="1.3"/></svg>
<div class="t" style="left:456px;top:172px;font-size:11px;line-height:11px;">Enable Conversion</div>
<div style="left:575px;top:171px;width:13px;height:13px;background:#fff;border:1px solid #333;box-sizing:border-box"></div>
<svg style="left:575px;top:171px" width="13" height="13"><polyline points="2.5,6.5 5,9.5 10.5,3" fill="none" stroke="#222" stroke-width="1.3"/></svg>
<div class="t" style="left:592px;top:172px;font-size:11px;line-height:11px;">Enable Weighting</div>
<div style="left:435px;top:198px;width:256px;height:81px;border:1px solid #dcdcdc;box-sizing:border-box"></div>
<div style="left:441px;top:194px;width:58px;height:10px;background:#f0f0f0"></div>
<div class="t" style="left:444px;top:194px;font-size:11px;line-height:11px;">Bit Settings</div>
<div style="left:426px;top:207px;width:195px;height:78px;border:5px solid #00662e;box-sizing:border-box;box-shadow:2px 2px 1px rgba(0,0,0,.25), inset 2px 2px 2px rgba(0,0,0,.28)"></div>
<div style="left:431px;top:212px;width:185px;height:3px;background:linear-gradient(#03552a,#004a22)"></div>
<div class="t" style="left:445px;top:218px;font-size:11px;line-height:11px;">Resolution:</div>
<div class="t" style="left:445px;top:249px;font-size:11px;line-height:11px;">Alignment</div>
<div style="left:547px;top:216px;width:64px;height:20px;background:#fff;border:1px solid #adadad;box-sizing:border-box"></div>
<div class="t" style="left:550px;top:220px;font-size:11px;line-height:11px;">18</div>
<div style="left:595px;top:218px;width:14px;height:16px;background:#f0f0f0;border-left:1px solid #c4c4c4;border-right:1px solid #c4c4c4;border-bottom:1px solid #c4c4c4;box-sizing:border-box"></div>
<div style="left:595px;top:225px;width:14px;height:2px;background:#c8c8c8"></div>
<svg style="left:596px;top:219px" width="12" height="14"><path d="M3 5 L6 2 L9 5 Z M3 9.5 L6 12.5 L9 9.5 Z" fill="#000"/></svg>
<div style="left:547px;top:248px;width:64px;height:20px;background:#fff;border:1px solid #adadad;box-sizing:border-box"></div>
<div class="t" style="left:550px;top:252px;font-size:11px;line-height:11px;">18</div>
<div style="left:595px;top:250px;width:14px;height:16px;background:#f0f0f0;border-left:1px solid #c4c4c4;border-right:1px solid #c4c4c4;border-bottom:1px solid #c4c4c4;box-sizing:border-box"></div>
<div style="left:595px;top:257px;width:14px;height:2px;background:#c8c8c8"></div>
<svg style="left:596px;top:251px" width="12" height="14"><path d="M3 5 L6 2 L9 5 Z M3 9.5 L6 12.5 L9 9.5 Z" fill="#000"/></svg>
<div style="left:435px;top:290px;width:258px;height:1px;background:#a0a0a0"></div>
<div style="left:435px;top:291px;width:258px;height:1px;background:#ffffff"></div>
<div style="left:436px;top:299px;width:78px;height:22px;background:#e1e1e1;border:1px solid #adadad;box-sizing:border-box;border:2px solid #0078d7"></div>
<div class="t" style="left:436.5px;top:305px;width:77px;text-align:center;font-size:11px;line-height:11px;color:#000">OK</div>
<div style="left:524px;top:299px;width:78px;height:22px;background:#e1e1e1;border:1px solid #adadad;box-sizing:border-box;"></div>
<div class="t" style="left:524.5px;top:305px;width:77px;text-align:center;font-size:11px;line-height:11px;color:#000">Cancel</div>
<div style="left:612px;top:299px;width:78px;height:22px;background:#e1e1e1;border:1px solid #adadad;box-sizing:border-box;background:#cccccc;border-color:#cccccc"></div>
<div class="t" style="left:612.5px;top:305px;width:77px;text-align:center;font-size:11px;line-height:11px;color:#a0a0a0">Apply</div>
<div style="left:0px;top:908px;width:1610px;height:1px;background:#000"></div>
<div style="left:1609px;top:0px;width:1px;height:909px;background:#000"></div>
</body></html>
